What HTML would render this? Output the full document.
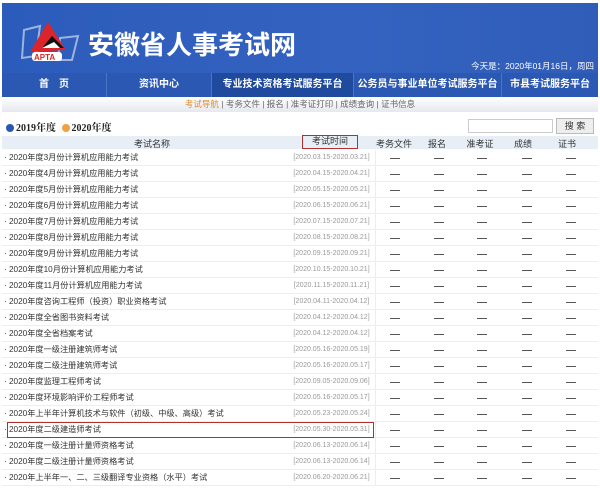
<!DOCTYPE html><html><head><meta charset="utf-8"><style>
*{margin:0;padding:0;box-sizing:border-box}
body{width:600px;height:492px;background:#fff;font-family:"Liberation Sans","Noto Sans CJK SC",sans-serif;overflow:hidden;position:relative}
.hd{position:absolute;left:2px;top:3px;width:596px;height:70px;background:linear-gradient(90deg,#2c5cbb,#3462c0 60%,#2f5db8)}
.title{position:absolute;left:86px;top:22px;color:#fff;font-size:26px;font-weight:bold;letter-spacing:0px;font-family:"Noto Sans CJK SC",sans-serif}
.date{position:absolute;right:4px;top:57px;color:#fff;font-size:8.5px}
.nav{position:absolute;left:2px;top:73px;width:596px;height:24px;background:#2b58b2;color:#fff;font-size:10px;font-weight:bold}
.nav div{position:absolute;top:0;height:24px;line-height:24px;text-align:center;border-right:1px solid #4b74c4;white-space:nowrap}
.sub{position:absolute;left:2px;top:97px;width:596px;height:15px;background:linear-gradient(#fff,#e6e8ee);font-size:8.5px;color:#666;text-align:center;line-height:15px}
.leg{position:absolute;left:6px;top:119px;font-size:10px;font-weight:bold;color:#222;font-family:"Liberation Serif","Noto Serif CJK SC",serif}
.dot{display:inline-block;width:8px;height:8px;border-radius:50%;vertical-align:-1px;margin-right:2px}
.srch{position:absolute;left:468px;top:119px;width:85px;height:14px;border:1px solid #ccc;background:#fff}
.btn{position:absolute;left:556px;top:118px;width:38px;height:16px;border:1px solid #bbb;background:#eee;font-size:9px;text-align:center;line-height:14px;color:#333}
.th{position:absolute;left:2px;top:136px;width:596px;height:13px;background:#e8eef6;font-size:9px;color:#333}
.th span,.r span{position:absolute;text-align:center}
.r{position:absolute;left:2px;width:596px;height:16px;font-size:8.2px;color:#333;border-bottom:1px solid #eee;line-height:16px}
.r .n{left:2px;text-align:left}
.r .d{left:286px;width:88px;color:#999;font-size:7px;border-right:1px solid #eee}
.r .m{width:10px;height:1px;background:#555;top:8px}
</style></head><body>
<div class="hd">
<svg style="position:absolute;left:18px;top:15px" width="60" height="48" viewBox="0 0 60 48">
<path d="M4 12 L20 8 L16 38 L2 40 Z" fill="none" stroke="#9cb3de" stroke-width="2"/>
<path d="M40 20 L58 18 L52 42 L38 42 Z" fill="none" stroke="#9cb3de" stroke-width="2"/>
<path d="M10 34 L28 4 L46 32 Z" fill="#d9252b"/>
<path d="M22 30 L32 18 L44 30 Z" fill="#111"/>
<path d="M22 30 L34 24 L40 30 Z" fill="#fff"/>
<rect x="12" y="34" width="30" height="9" rx="3" fill="#fff"/>
<text x="14" y="42" font-size="8" font-weight="bold" fill="#d9252b" font-family="Liberation Sans">APTA</text>
</svg>
<div class="title">安徽省人事考试网</div>
<div class="date">今天是：2020年01月16日，周四</div>
</div>
<div class="nav">
<div style="left:0;width:105px">首　页</div>
<div style="left:105px;width:105px">资讯中心</div>
<div style="left:210px;width:142px;background:#1f4a9e">专业技术资格考试服务平台</div>
<div style="left:352px;width:148px">公务员与事业单位考试服务平台</div>
<div style="left:500px;width:96px;border:none">市县考试服务平台</div>
</div>
<div class="sub"><span style="color:#e08a2e">考试导航</span> | 考务文件 | 报名 | 准考证打印 | 成绩查询 | 证书信息</div>
<div class="leg"><span class="dot" style="background:#2a57b0"></span>2019年度 <span class="dot" style="background:#f0a040;margin-left:3px"></span>2020年度</div>
<div class="srch"></div><div class="btn">搜 索</div>
<div class="th"><span style="left:120px;width:60px;top:1px">考试名称</span>
<span style="left:300px;width:56px;top:-1px;height:14px;border:1.5px solid #b03030;line-height:11px">考试时间</span>
<span style="left:370px;width:44px;top:1px">考务文件</span>
<span style="left:420px;width:30px;top:1px">报名</span>
<span style="left:460px;width:36px;top:1px">准考证</span>
<span style="left:506px;width:30px;top:1px">成绩</span>
<span style="left:550px;width:30px;top:1px">证书</span></div>
<div id="rows"></div>
<div style="position:absolute;left:7px;top:422px;width:367px;height:16px;border:1.5px solid #b03030"></div>
<script>
var d=[["2020年度3月份计算机应用能力考试","03.15","03.21"],["2020年度4月份计算机应用能力考试","04.15","04.21"],["2020年度5月份计算机应用能力考试","05.15","05.21"],["2020年度6月份计算机应用能力考试","06.15","06.21"],["2020年度7月份计算机应用能力考试","07.15","07.21"],["2020年度8月份计算机应用能力考试","08.15","08.21"],["2020年度9月份计算机应用能力考试","09.15","09.21"],["2020年度10月份计算机应用能力考试","10.15","10.21"],["2020年度11月份计算机应用能力考试","11.15","11.21"],["2020年度咨询工程师（投资）职业资格考试","04.11","04.12"],["2020年度全省图书资料考试","04.12","04.12"],["2020年度全省档案考试","04.12","04.12"],["2020年度一级注册建筑师考试","05.16","05.19"],["2020年度二级注册建筑师考试","05.16","05.17"],["2020年度监理工程师考试","09.05","09.06"],["2020年度环境影响评价工程师考试","05.16","05.17"],["2020年上半年计算机技术与软件（初级、中级、高级）考试","05.23","05.24"],["2020年度二级建造师考试","05.30","05.31"],["2020年度一级注册计量师资格考试","06.13","06.14"],["2020年度二级注册计量师资格考试","06.13","06.14"],["2020年上半年一、二、三级翻译专业资格（水平）考试","06.20","06.21"]];
var h="";d.forEach(function(r,i){h+='<div class="r" style="top:'+(150+i*16)+'px"><span class="n">· '+r[0]+'</span><span class="d">[2020.'+r[1]+'-2020.'+r[2]+']</span>';[388,432,475,520,564].forEach(function(x){h+='<span class="m" style="left:'+x+'px"></span>'});h+='</div>'});
document.getElementById("rows").innerHTML=h;
</script>
</body></html>
